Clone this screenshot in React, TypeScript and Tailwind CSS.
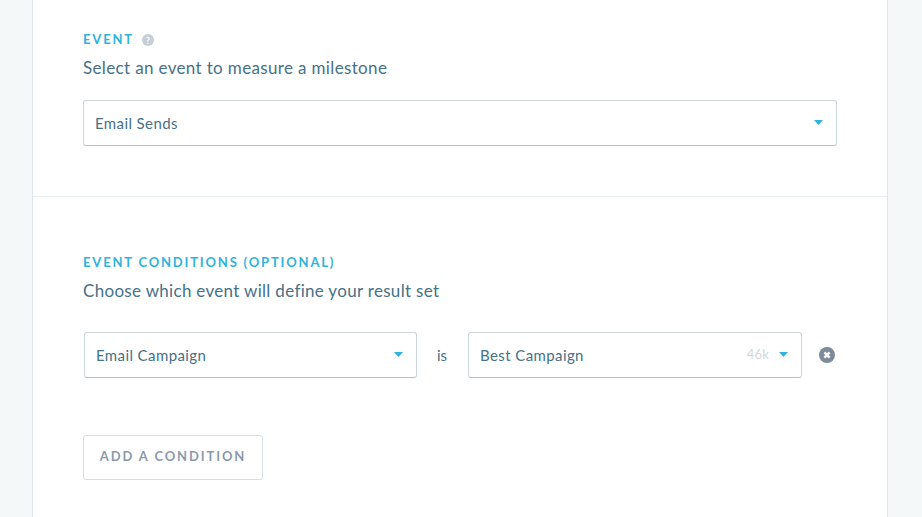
import React from "react";

function Caret() {
  return (
    <svg className="-mt-[1px] shrink-0" width="9" height="5" viewBox="0 0 9 5">
      <path d="M0 0h9L4.5 5z" fill="#2fb3dc" />
    </svg>
  );
}

const box = "h-[46px] border border-[#ccd6db] border-b-[#b6c2c9] rounded-[3px] flex items-center text-[15px] tracking-[0.4px]";

export default function App() {
  return (
    <div className="w-[922px] h-[517px] overflow-hidden bg-[#f4f8f9] font-['Lato','sans-serif'] text-[#467187]">
      <div className="ml-[32px] w-[856px] h-[517px] bg-white border-x border-[#dde6ea]">
        <section className="h-[197px] border-b border-[#e6eef1] px-[50px] pt-[31px]">
          <div className="flex items-center gap-[8px] h-[16px] text-[13px] font-bold tracking-[0.14em] text-[#2fb3dc] leading-none">
            EVENT
            <span className="mt-[2px] w-[12px] h-[12px] rounded-full bg-[#c5ced5] text-white text-[9px] flex items-center justify-center tracking-normal">?</span>
          </div>
          <p className="mt-[8px] text-[17px] leading-[26px] tracking-[0.35px]">Select an event to measure a milestone</p>
          <div className={`${box} mt-[19px] w-[754px] justify-between pl-[12px] pr-[13px]`}>
            <span className="-ml-px">Email Sends</span>
            <Caret />
          </div>
        </section>
        <section className="pl-[50px] pt-[57px]">
          <div className="h-[16px] text-[13px] font-bold tracking-[0.14em] text-[#2fb3dc] leading-[16px]">EVENT CONDITIONS (OPTIONAL)</div>
          <p className="mt-[8px] text-[17px] leading-[26px] tracking-[0.31px]">Choose which event will define your result set</p>
          <div className="mt-[28px] flex items-center">
            <div className={`${box} ml-px w-[333px] justify-between pl-[11px] pr-[13px]`}>
              <span>Email Campaign</span>
              <Caret />
            </div>
            <span className="w-[51px] pr-[1px] text-center text-[15px]">is</span>
            <div className={`${box} w-[334px] pl-[11px] pr-[13px]`}>
              <span className="flex-1">Best Campaign</span>
              <span className="mr-[10px] text-[13px] text-[#d3d8da] tracking-[0.2px]">46k</span>
              <Caret />
            </div>
            <svg className="ml-[17px]" width="16" height="16" viewBox="0 0 16 16">
              <circle cx="8" cy="8" r="8" fill="#7c8a99" />
              <path d="M5.4 5.4l5.2 5.2M10.6 5.4l-5.2 5.2" stroke="#fff" strokeWidth="2.4" />
            </svg>
          </div>
          <button className="mt-[57px] h-[45px] w-[180px] pb-[2px] border border-[#d5dfe4] rounded-[3px] text-[13px] font-bold tracking-[0.145em] text-[#8b9aab]">ADD A CONDITION</button>
        </section>
      </div>
    </div>
  );
}
